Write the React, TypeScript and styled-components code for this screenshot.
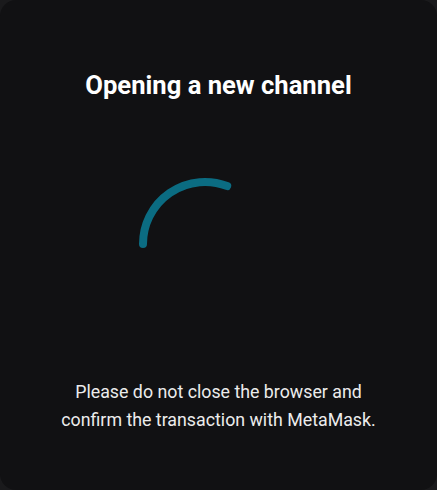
import React from "react"
import styled, { createGlobalStyle } from "styled-components"

const GlobalStyle = createGlobalStyle`
  html, body {
    margin: 0;
    padding: 0;
    background: #1a1a1c;
  }

  body {
    font-family: Roboto, "Noto Sans", sans-serif;
  }
`

const Card = styled.div`
  box-sizing: border-box;
  width: 437px;
  height: 490px;
  border-radius: 16px;
  background: #111113;
  padding-top: 70px;

  display: flex;
  flex-direction: column;
  align-items: center;
`

const Title = styled.h2`
  margin: 0;
  font-size: 25.6px;
  font-weight: 700;
  line-height: 30px;
  color: #ffffff;
`

const SpinnerWrap = styled.div`
  margin-top: 74px;
  margin-right: 28px;
  width: 140px;
  height: 140px;
`

const Message = styled.p`
  margin: 64px 0 0;
  font-size: 17.8px;
  line-height: 28px;
  text-align: center;
  color: #ececec;
`

const Spinner = () => (
  <SpinnerWrap>
    <svg width="140" height="140" viewBox="0 0 140 140" fill="none">
      <path
        d="M 92.2 12.1 A 62 62 0 0 0 8 70"
        stroke="#0b6c82"
        strokeWidth="8"
        strokeLinecap="round"
      />
    </svg>
  </SpinnerWrap>
)

const App = () => {
  return (
    <>
      <GlobalStyle />
      <Card>
        <Title>Opening a new channel</Title>
        <Spinner />
        <Message>
          Please do not close the browser and
          <br />
          confirm the transaction with MetaMask.
        </Message>
      </Card>
    </>
  )
}

export default App
